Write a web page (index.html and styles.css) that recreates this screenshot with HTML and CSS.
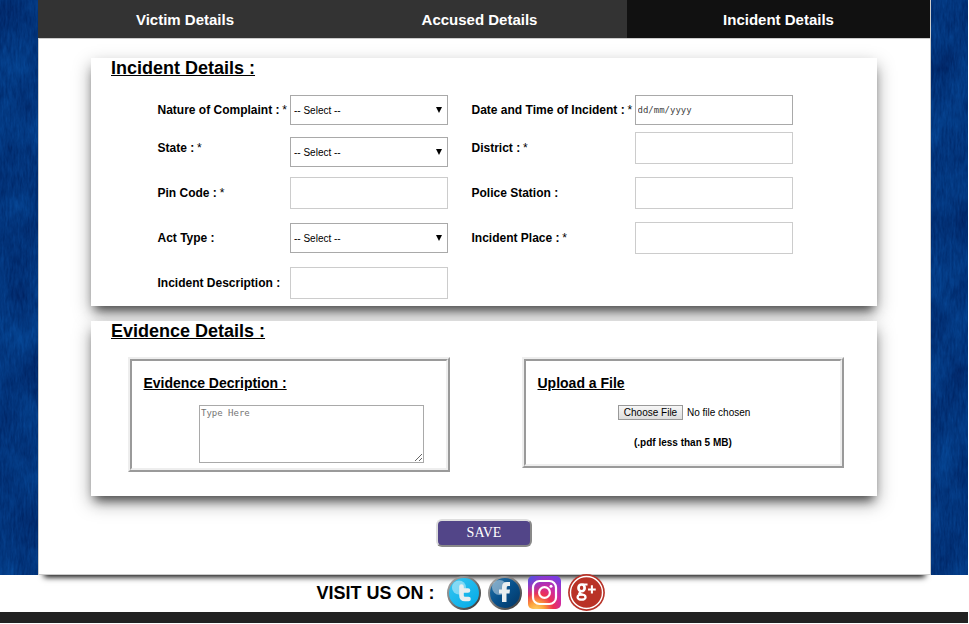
FILE: index.html
```html
<!DOCTYPE html>
<html lang="en">
<head>
<meta charset="utf-8">
<title>Incident Details</title>
<link rel="stylesheet" href="styles.css">
</head>
<body>
<div class="page">
  <div class="backdrop">
    <svg class="cloth" width="968" height="575" aria-hidden="true">
      <filter id="weave" x="0" y="0" width="100%" height="100%" color-interpolation-filters="sRGB">
        <feTurbulence type="fractalNoise" baseFrequency=".5 .09" numOctaves="3" seed="4"/>
        <feColorMatrix values=".06 0 0 0 -.02  .18 0 0 0 .115  .26 0 0 0 .36  0 0 0 0 1"/>
      </filter>
      <filter id="weft" x="0" y="0" width="100%" height="100%" color-interpolation-filters="sRGB">
        <feTurbulence type="fractalNoise" baseFrequency=".03 .02" numOctaves="4" seed="9"/>
        <feColorMatrix values=".06 0 0 0 -.02  .35 0 0 0 .04  .5 0 0 0 .24  0 0 0 0 .45"/>
      </filter>
      <rect width="968" height="575" filter="url(#weave)"/>
      <rect width="968" height="575" filter="url(#weft)"/>
    </svg>
    <main class="sheet">
      <nav class="tabs">
        <a class="tab">Victim Details</a>
        <a class="tab">Accused Details</a>
        <a class="tab active">Incident Details</a>
      </nav>
      <section class="panel incident">
        <h2>Incident Details :</h2>
        <div class="fields">
          <label>Nature of Complaint : <b>*</b></label>
          <div class="select"><select><option>-- Select --</option></select></div>
          <label>Date and Time of Incident : <b>*</b></label>
          <input class="date" placeholder="dd/mm/yyyy">

          <label>State : <b>*</b></label>
          <div class="select low"><select><option>-- Select --</option></select></div>
          <label>District : <b>*</b></label>
          <input>

          <label>Pin Code : <b>*</b></label>
          <input>
          <label>Police Station :</label>
          <input>

          <label>Act Type :</label>
          <div class="select"><select><option>-- Select --</option></select></div>
          <label>Incident Place : <b>*</b></label>
          <input>

          <label>Incident Description :</label>
          <input>
        </div>
      </section>
      <section class="panel evidence">
        <h2>Evidence Details :</h2>
        <div class="boxes">
          <div class="box describe">
            <h3>Evidence Decription :</h3>
            <textarea placeholder="Type Here"></textarea>
          </div>
          <div class="box upload">
            <h3>Upload a File</h3>
            <div class="file"><button class="choose">Choose File</button><span>No file chosen</span></div>
            <p>(.pdf less than 5 MB)</p>
          </div>
        </div>
      </section>
      <button class="save">SAVE</button>
    </main>
  </div>
  <footer class="social">
    <span>VISIT US ON :</span>
    <svg class="tw" width="36" height="36" viewBox="0 0 36 36">
      <defs>
        <linearGradient id="rim" x1="0" y1="0" x2="1" y2="1"><stop offset="0" stop-color="#aaa"/><stop offset=".5" stop-color="#777"/><stop offset="1" stop-color="#333"/></linearGradient>
        <linearGradient id="sky" x1="0" y1="0" x2="1" y2="1"><stop offset="0" stop-color="#38c6f0"/><stop offset="1" stop-color="#00a9e8"/></linearGradient>
        <linearGradient id="navy" x1="0" y1="0" x2="1" y2="1"><stop offset="0" stop-color="#2b78ab"/><stop offset=".5" stop-color="#07508b"/><stop offset="1" stop-color="#033461"/></linearGradient>
      </defs>
      <circle cx="18" cy="18" r="16" fill="url(#sky)" stroke="url(#rim)" stroke-width="2"/>
      <circle cx="13" cy="12.500" r="7" fill="#fff" opacity=".42"/>
      <path d="M15.500 11.500v9q0 3.500 3.500 3.500h3.500M15.500 15.500h6.500" fill="none" stroke="#e9eef0" stroke-width="4.600" stroke-linecap="round" stroke-linejoin="round"/>
    </svg>
    <svg class="fb" width="36" height="36" viewBox="0 0 36 36">
      <circle cx="18" cy="18" r="16" fill="url(#navy)" stroke="url(#rim)" stroke-width="2"/>
      <circle cx="12.500" cy="12.500" r="7.500" fill="#fff" opacity=".42"/>
      <path d="M15 27V18.500h-3v-4h3v-2.500q0-5 5-5h3v4h-2q-1.500 0-1.500 1.500v2h3.500l-.5 4h-3V27z" fill="#e9eef0"/>
    </svg>
    <svg class="ig" width="33" height="33" viewBox="0 0 33 33">
      <defs>
        <radialGradient id="sun" cx=".25" cy="1.050" r="1.150"><stop offset="0" stop-color="#ffd76a"/><stop offset=".22" stop-color="#fba13b"/><stop offset=".45" stop-color="#ee3250"/><stop offset=".68" stop-color="#cf29a0"/><stop offset="1" stop-color="#7a3ce0"/></radialGradient>
        <radialGradient id="violet" cx="0" cy="0" r=".65"><stop offset="0" stop-color="#4458e0"/><stop offset="1" stop-color="#7a3ce0" stop-opacity="0"/></radialGradient>
      </defs>
      <rect width="33" height="33" rx="5" fill="url(#sun)"/>
      <rect width="33" height="33" rx="5" fill="url(#violet)"/>
      <g fill="none" stroke="#fff" stroke-width="2.200"><rect x="5" y="5" width="23" height="23" rx="6.500"/><circle cx="16.500" cy="16.500" r="5.400"/></g>
      <circle cx="23" cy="10.300" r="1.500" fill="#fff"/>
    </svg>
    <svg class="gp" width="37" height="37" viewBox="0 0 36 36">
      <circle cx="18" cy="18" r="17.900" fill="#b83329"/>
      <circle cx="18" cy="18" r="15.600" fill="#b93226" stroke="#fff" stroke-width="1.400"/>
      <g fill="none" stroke="#fff">
        <ellipse cx="13.200" cy="13.500" rx="3" ry="3.300" stroke-width="2.600"/>
        <ellipse cx="13.200" cy="22.500" rx="3.900" ry="2.500" stroke-width="2.200"/>
        <path d="M14 10.300h5M12 17l-1 2 3 1.200" stroke-width="2"/>
        <path d="M19.500 15h7.500M23.250 11v8" stroke-width="2"/>
      </g>
    </svg>
  </footer>
  <div class="base"></div>
</div>
</body>
</html>
```
FILE: styles.css
```css
* { box-sizing: border-box; }
body { margin: 0; background: #fff; font-family: "Liberation Sans", Arial, sans-serif; color: #000; overflow: hidden; }
.page { width: 968px; height: 624px; }
.backdrop { position: relative; height: 575px; padding-left: 38px; background: #03357b; }
.cloth { position: absolute; left: 0; top: 0; }
.sheet {
  position: relative;
  width: 893px;
  height: 575px;
  background: #fff;
  border: solid #ccc;
  border-width: 0 1px 1px;
  box-shadow: 0 8px 6px -6px #000;
  display: flex;
  flex-direction: column;
}
.tabs { display: flex; height: 39px; margin: 0 0 0 -1px; background: #333; border-bottom: 1px solid #ccc; flex: none; }
.tab { width: 294px; color: #fff; font: bold 15px/39px "Liberation Sans", Arial, sans-serif; text-align: center; }
.tab:nth-child(2) { width: 295px; }
.tab.active { width: 303px; background: #111; }
.panel { width: 786px; margin-left: 52px; background: #fff; flex: none; box-shadow: 0 7px 17px rgba(0,0,0,.34), 0 8px 10px -4px rgba(0,0,0,.6); }
.incident { height: 248px; margin-top: 19px; }
.evidence { height: 175px; margin-top: 15px; }
h2 { margin: 0; padding-left: 20px; font-size: 18px; line-height: 20px; text-decoration: underline; }
.fields {
  display: grid;
  grid-template-columns: 133px 181px 164px 158px;
  grid-template-rows: 31px repeat(4, 45px);
  align-items: center;
  padding: 16px 0 0 66px;
}
label { padding-left: .5px; font-size: 12px; font-weight: bold; white-space: nowrap; }
label b { font-weight: normal; margin-left: -.5px; }
input { width: 158px; height: 32px; border: 1px solid #ccc; background: #fff; padding: 0 2px; }
.date { height: 30px; padding-left: 1.5px; border-color: #a9a9a9; font: 9px "DejaVu Sans Mono", monospace; }
.date::placeholder { color: #444; }
.select { position: relative; width: 158px; height: 30px; }
.low { margin-top: 8px; }
.select select { appearance: none; width: 100%; height: 100%; border: 1px solid #a9a9a9; border-radius: 0; background: #fff; color: #000; padding: 1px 3px 0; font: 10px "Liberation Sans", Arial, sans-serif; }
.select::after { content: ""; position: absolute; right: 6px; top: 12px; border: solid transparent; border-width: 6px 3.500px 0; border-top-color: #000; }
.boxes { display: flex; align-items: flex-start; gap: 72px; padding: 16px 0 0 37px; }
.box { width: 322px; height: 111px; border: 4px ridge #eee; padding: 14px 10px 0 11.5px; }
.describe { height: 115px; }
h3 { margin: 0; font-size: 14px; line-height: 16px; text-decoration: underline; }
textarea { display: block; width: 225px; height: 58px; margin: 14px 0 0 55.5px; padding: 2px 1px; border: 1px solid #a9a9a9; border-radius: 0; resize: both; font: 9px "DejaVu Sans Mono", monospace; }
textarea::placeholder { color: #757575; }
.file { display: flex; align-items: center; gap: 4px; margin: 14px 0 0 80.5px; font-size: 10px; }
.choose { width: 65px; height: 15px; padding: 0; border: 1px solid #999; border-radius: 0; background: linear-gradient(#f6f6f6, #ddd); font: 10px/12px "Liberation Sans", Arial, sans-serif; color: #000; }
.upload p { margin: 16px 0 0 96.5px; font-size: 10px; line-height: 14px; font-weight: bold; }
.save { width: 96px; height: 28px; margin: 23px 0 0 397px; padding: 0; border: 2px outset #ddd; border-radius: 6px; background: #524588; color: #fff; font: 14px "Liberation Serif", serif; flex: none; }
.social { height: 37px; padding-left: 316px; display: flex; align-items: center; }
.social span { padding-left: .5px; font-size: 18px; font-weight: bold; width: 130px; white-space: nowrap; }
.social svg { position: relative; top: -1px; flex: none; }
.fb { margin-left: 5px; }
.ig { margin-left: 5px; }
.gp { margin-left: 7px; }
.base { height: 11px; background: #222; }
```
